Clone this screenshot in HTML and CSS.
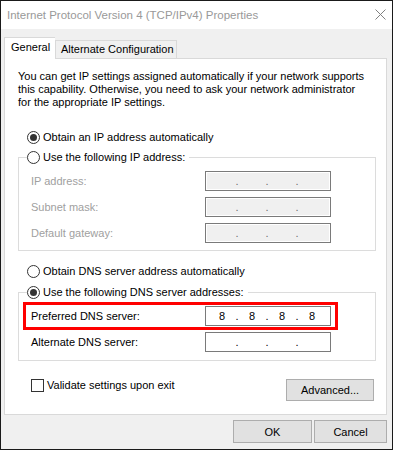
FILE: index.html
```html
<!DOCTYPE html>
<html lang="en">
<head>
    <meta charset="UTF-8">
    <meta name="viewport" content="width=device-width, initial-scale=1.0">
    <title>Internet Protocol Version 4 (TCP/IPv4) Properties</title>
    <link rel="stylesheet" href="styles.css">
</head>
<body>
    <div class="window">
        <div class="titlebar">
            <span class="title">Internet Protocol Version 4 (TCP/IPv4) Properties</span>
            <svg class="close" width="11" height="11" viewBox="0 0 11 11">
                <path d="M0.5 0.5L10.5 10.5M10.5 0.5L0.5 10.5" stroke="#808080" stroke-width="1" fill="none"/>
            </svg>
        </div>

        <div class="dialog-body">
            <div class="tabs">
                <div class="tab active">General</div>
                <div class="tab">Alternate Configuration</div>
            </div>

            <div class="panel">
                <p class="intro">
                    You can get IP settings assigned automatically if your network supports<br>
                    this capability. Otherwise, you need to ask your network administrator<br>
                    for the appropriate IP settings.
                </p>

                <!-- Adresa IP -->
                <label class="option first"><span class="radio checked"></span>Obtain an IP address automatically</label>

                <fieldset class="group">
                    <legend><label class="option"><span class="radio"></span>Use the following IP address:</label></legend>
                    <div class="field-row disabled">
                        <span class="field-label">IP address:</span>
                        <span class="ip-box"><span class="octet"></span><span class="dot">.</span><span class="octet"></span><span class="dot">.</span><span class="octet"></span><span class="dot">.</span><span class="octet"></span></span>
                    </div>
                    <div class="field-row disabled">
                        <span class="field-label">Subnet mask:</span>
                        <span class="ip-box"><span class="octet"></span><span class="dot">.</span><span class="octet"></span><span class="dot">.</span><span class="octet"></span><span class="dot">.</span><span class="octet"></span></span>
                    </div>
                    <div class="field-row disabled">
                        <span class="field-label">Default gateway:</span>
                        <span class="ip-box"><span class="octet"></span><span class="dot">.</span><span class="octet"></span><span class="dot">.</span><span class="octet"></span><span class="dot">.</span><span class="octet"></span></span>
                    </div>
                </fieldset>

                <!-- DNS -->
                <label class="option dns-auto"><span class="radio"></span>Obtain DNS server address automatically</label>

                <fieldset class="group dns">
                    <legend><label class="option"><span class="radio checked"></span>Use the following DNS server addresses:</label></legend>
                    <div class="field-row marked">
                        <span class="field-label">Preferred DNS server:</span>
                        <span class="ip-box"><span class="octet">8</span><span class="dot">.</span><span class="octet">8</span><span class="dot">.</span><span class="octet">8</span><span class="dot">.</span><span class="octet">8</span></span>
                        <span class="highlight"></span>
                    </div>
                    <div class="field-row">
                        <span class="field-label">Alternate DNS server:</span>
                        <span class="ip-box"><span class="octet"></span><span class="dot">.</span><span class="octet"></span><span class="dot">.</span><span class="octet"></span><span class="dot">.</span><span class="octet"></span></span>
                    </div>
                </fieldset>

                <div class="panel-footer">
                    <label class="option check-option"><span class="checkbox"></span>Validate settings upon exit</label>
                    <button class="btn advanced">Advanced...</button>
                </div>
            </div>

            <div class="buttons">
                <button class="btn ok">OK</button>
                <button class="btn cancel">Cancel</button>
            </div>
        </div>
    </div>
</body>
</html>
```

FILE: styles.css
```css
* {
    box-sizing: border-box;
}
body {
    margin: 0;
    font-family: "Liberation Sans", Arial, sans-serif;
    font-size: 11px;
    line-height: 13px;
    color: #000;
}
.window {
    width: 393px;
    height: 450px;
    border: 1px solid #1a1a1a;
    background-color: #f0f0f0;
    display: flex;
    flex-direction: column;
}
/* Titulek okna */
.titlebar {
    height: 28px;
    background-color: #ffffff;
    display: flex;
    align-items: center;
    justify-content: space-between;
    padding: 0 6px 0 6px;
}
.title {
    font-size: 11.5px;
    color: #999999;
}
.close {
    display: block;
    margin-bottom: 1px;
}
.dialog-body {
    flex: 1;
    padding: 8px 5px 0 3px;
}
/* Záložky */
.tabs {
    display: flex;
    align-items: flex-end;
    height: 21px;
}
.tab {
    height: 18px;
    border: 1px solid #d9d9d9;
    border-bottom: none;
    background-color: #f0f0f0;
    padding: 2px 0 0 5px;
    width: 122px;
    white-space: nowrap;
}
.tab.active {
    position: relative;
    z-index: 1;
    height: 22px;
    margin-bottom: -1px;
    width: 51px;
    background-color: #ffffff;
    padding: 3px 0 0 6px;
    border-right: none;
}
.panel {
    height: 357px;
    background-color: #ffffff;
    border: 1px solid #d9d9d9;
    padding: 11px 10px 0 13px;
}
.intro {
    margin: 0;
    white-space: nowrap;
}
/* Přepínače */
.option {
    display: flex;
    align-items: center;
    height: 13px;
    white-space: nowrap;
}
.radio,
.checkbox {
    width: 13px;
    height: 13px;
    border: 1px solid #333333;
    background-color: #ffffff;
    margin-right: 3px;
    flex-shrink: 0;
    display: flex;
    align-items: center;
    justify-content: center;
}
.radio {
    border-radius: 50%;
}
.radio.checked::after {
    content: "";
    width: 7px;
    height: 7px;
    border-radius: 50%;
    background-color: #333333;
}
.option.first {
    margin: 22px 0 0 9px;
}
.option.dns-auto {
    margin: 14px 0 0 9px;
}
.group {
    margin: 7px 0 0 0;
    padding: 7px 0 7px 8px;
    border: 1px solid #dcdcdc;
    min-width: 0;
}
.group.dns {
    margin-top: 8px;
    padding-bottom: 8px;
}
.group legend {
    padding: 0 4px 0 0;
}
.field-row {
    position: relative;
    display: grid;
    grid-template-columns: 174px 126px;
    align-items: center;
    width: 300px;
    height: 20px;
    margin: 0 0 6px 4px;
    white-space: nowrap;
}
.field-row:last-child {
    margin-bottom: 0;
}
.field-row.disabled {
    color: #a0a0a0;
}
/* Pole pro IP adresu */
.ip-box {
    display: flex;
    height: 20px;
    border: 1px solid #7a7a7a;
    background-color: #ffffff;
    padding-left: 3px;
    color: #000;
}
.disabled .ip-box {
    background-color: #f0f0f0;
    box-shadow: inset 0 0 0 1px #ffffff;
    color: #6d6d6d;
}
.octet {
    width: 26px;
    text-align: center;
    line-height: 18px;
}
.dot {
    width: 4px;
    text-align: center;
    line-height: 18px;
}
.highlight {
    position: absolute;
    left: -8px;
    right: -7px;
    top: -4px;
    bottom: -4px;
    border: 3px solid #ff0000;
    pointer-events: none;
}
.panel-footer {
    display: flex;
    justify-content: space-between;
    align-items: flex-start;
    margin-top: 18px;
    padding-right: 2px;
}
.check-option {
    margin-left: 13px;
    margin-top: 0;
}
/* Tlačítka */
.btn {
    font-family: inherit;
    font-size: 11px;
    color: #000;
    background-color: #e1e1e1;
    border: 1px solid #adadad;
    padding: 0;
    height: 22px;
}
.advanced {
    width: 88px;
}
.buttons {
    display: flex;
    justify-content: flex-end;
    gap: 2px;
    margin-top: 5px;
}
.ok {
    width: 79px;
    height: 23px;
}
.cancel {
    width: 73px;
    height: 23px;
}
```
